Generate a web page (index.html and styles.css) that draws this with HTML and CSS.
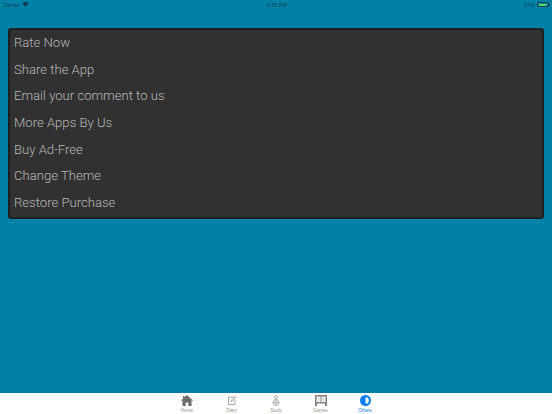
FILE: index.html
```html
<!DOCTYPE html>
<html lang="en">
<head>
    <meta charset="UTF-8">
    <title>Others</title>
    <link rel="stylesheet" href="styles.css">
</head>
<body>
    <div class="statusbar">
        <div class="status-left">
            Carrier
            <svg class="wifi" width="7" height="5" viewBox="0 0 8 6"><path d="M0 1.600C2.300-.5 5.700-.5 8 1.600L4 6z" fill="#123f52"/></svg>
        </div>
        <div class="status-time">4:35 PM</div>
        <div class="status-right">
            97%
            <span class="battery"><span class="battery-level"></span></span>
            <span class="battery-tip"></span>
        </div>
    </div>

    <div class="content">
        <ul class="menu">
            <li>Rate Now</li>
            <li>Share the App</li>
            <li>Email your comment to us</li>
            <li>More Apps By Us</li>
            <li>Buy Ad-Free</li>
            <li>Change Theme</li>
            <li>Restore Purchase</li>
        </ul>
    </div>

    <div class="tabbar">
        <div class="tab">
            <svg width="12" height="11" viewBox="0 0 12 11"><path d="M6 0l6 5.400-.6.7-.9-.8V11H7.300V7.400H4.700V11H1.500V5.300l-.9.8L0 5.400 2 3.600V1h1.400v1.300z" fill="#6d6d6d"/></svg>
            <span>Home</span>
        </div>
        <div class="tab">
            <svg width="10" height="11" viewBox="0 0 10 11"><path d="M7 2H1.500v7.500H8V5M4 6.500l.3-1.300L8.200 1.300l1 1-3.900 3.900z" fill="none" stroke="#9a9a9a" stroke-width=".9"/></svg>
            <span>Diary</span>
        </div>
        <div class="tab">
            <svg width="10" height="11" viewBox="0 0 10 11"><g fill="none" stroke="#a8a8a8" stroke-width=".9"><circle cx="5" cy="2" r="1.500"/><circle cx="5" cy="7.500" r="3"/><path d="M2 7.500h6M5 4.500v6"/></g></svg>
            <span>Study</span>
        </div>
        <div class="tab">
            <svg width="12" height="11" viewBox="0 0 12 11"><path d="M0 0h12v11h-2V8.500H2V11H0zM1.500 1.500V7h4V1.500zm5 0V7h4V1.500z" fill="#808080" fill-rule="evenodd"/><path d="M2.500 3h2M7.500 3h2M2.500 5h2M7.500 5h2" stroke="#a0a0a0" stroke-width=".8"/></svg>
            <span>Games</span>
        </div>
        <div class="tab active">
            <svg width="11" height="11" viewBox="0 0 11 11"><circle cx="5.500" cy="5.500" r="5.500" fill="#0a7cf0"/><path d="M5.500 2.200a3.300 3.300 0 0 1 0 6.600z" fill="#fff"/></svg>
            <span>Others</span>
        </div>
    </div>
</body>
</html>
```

FILE: styles.css
```css
* {
    margin: 0;
    padding: 0;
    box-sizing: border-box;
    font-family: "Liberation Sans", Arial, sans-serif;
}

html,
body {
    height: 100%;
}

body {
    display: flex;
    flex-direction: column;
    background: #0082a6;
    overflow: hidden;
}

.statusbar {
    display: grid;
    grid-template-columns: 1fr auto 1fr;
    align-items: center;
    height: 9px;
    padding: 0 2px 0 3px;
    font-size: 5.5px;
    color: #123f52;
}

.status-left {
    display: flex;
    align-items: center;
    gap: 2px;
}

.status-right {
    display: flex;
    align-items: center;
    justify-content: flex-end;
}

.battery {
    width: 12px;
    height: 5px;
    margin-left: 2px;
    padding: 0.5px;
    border: 0.5px solid #123f52;
    border-radius: 1px;
}

.battery-level {
    display: block;
    width: 85%;
    height: 100%;
    background: #4cd964;
}

.battery-tip {
    width: 1px;
    height: 2px;
    background: #123f52;
}

.content {
    flex: 1;
    padding: 19px 8px 0;
}

.menu {
    list-style: none;
    height: 191px;
    background: #313131;
    border: 2px solid #1b1f22;
    border-radius: 3px;
}

.menu li {
    height: 26.65px;
    padding-left: 4px;
    font-family: Roboto, "Liberation Sans", sans-serif;
    font-size: 13.1px;
    font-weight: 300;
    line-height: 25.5px;
    color: #b8b8b8;
}

.tabbar {
    display: flex;
    justify-content: center;
    height: 21px;
    background: #ffffff;
}

.tab {
    display: flex;
    flex-direction: column;
    align-items: center;
    width: 44.5px;
    padding-top: 2px;
    font-size: 4.5px;
    color: #8f8f8f;
}

.tab span {
    margin-top: 2px;
}

.tab.active {
    color: #0a7cf0;
}
```
